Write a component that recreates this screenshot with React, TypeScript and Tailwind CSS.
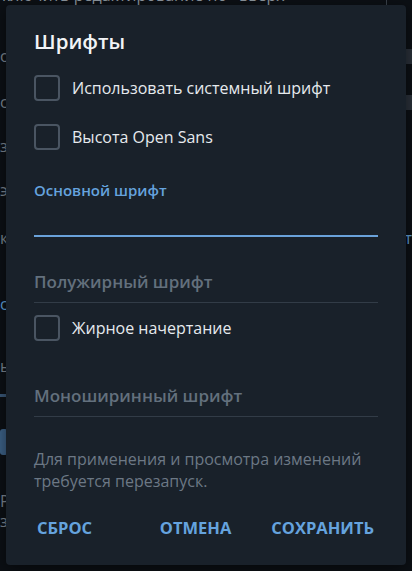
import { ReactNode } from 'react'

const font = { fontFamily: '"Open Sans", "Noto Sans", sans-serif' }

function Checkbox({ label }: { label: string }) {
  return (
    <div className="flex items-center gap-[12px] h-[26px]">
      <div className="w-[26px] h-[26px] rounded-[4px] border-2 border-[#4a5562] flex-shrink-0" />
      <span className="text-[16px] leading-[26px] text-[#e6eaee]">{label}</span>
    </div>
  )
}

function FieldTitle({ children, className }: { children: ReactNode; className: string }) {
  return (
    <div className={`border-b border-[#323c47] pb-[8px] ${className}`}>
      <p className="text-[17px] leading-[24px] font-semibold text-[#63707d]">{children}</p>
    </div>
  )
}

export default function App() {
  return (
    <div className="relative w-[412px] h-[571px] overflow-hidden bg-[#0c1015]" style={font}>
      {/* page behind the overlay */}
      <div className="flex flex-col text-[#7c8690] text-[16px]">
        <div className="flex items-end h-[6px] overflow-hidden">
          <p className="leading-[22px] whitespace-nowrap pl-[2px] mt-[-14px] text-[#8d969f]">
            ключить редактирование по «вверх»
          </p>
          <div className="ml-auto mr-[14px] w-[12px] h-[6px] border-l border-[#3a424b]" />
        </div>
        <div className="flex justify-between items-center h-[44px] mt-[28px]">
          <span className="leading-none">о</span>
          <div className="w-[8px] h-[15px] bg-[#2a313a]" />
        </div>
        <div className="flex justify-between items-center h-[44px] mt-[2px]">
          <span className="leading-none">с</span>
          <div className="w-[8px] h-[15px] bg-[#2a313a]" />
        </div>
        <div className="flex items-center h-[44px]">
          <span className="leading-none">з</span>
        </div>
        <div className="flex items-center h-[44px]">
          <span className="leading-none">э</span>
        </div>
        <div className="flex justify-between items-center h-[52px]">
          <span className="leading-none">к</span>
          <span className="leading-none text-[#5f9fd8]">т</span>
        </div>
        <div className="flex items-center h-[80px]">
          <span className="leading-none text-[#5f9fd8]">с</span>
        </div>
        <div className="flex items-center h-[44px]">
          <span className="leading-none">ь</span>
        </div>
        <div className="h-[3px] w-[8px] bg-[#3a5878] mt-[6px]" />
        <div className="mt-[32px] w-[8px] h-[26px] rounded-[3px] bg-[#3d6288]" />
        <div className="flex flex-col mt-[36px] leading-[20px]">
          <span>Р</span>
          <span>з</span>
        </div>
      </div>

      {/* dialog */}
      <div className="absolute left-[6px] top-[5px] w-[400px] h-[560px] rounded-[4px] bg-[#19212a] px-[28px] flex flex-col shadow-[0_4px_16px_rgba(0,0,0,0.5)]">
        <h1 className="mt-[22px] text-[20.5px] leading-[28px] font-semibold text-[#f2f4f6]">Шрифты</h1>

        <div className="mt-[20px]">
          <Checkbox label="Использовать системный шрифт" />
        </div>
        <div className="mt-[23px]">
          <Checkbox label="Высота Open Sans" />
        </div>

        {/* main font field, focused */}
        <p className="mt-[30px] text-[15px] leading-[20px] font-semibold text-[#65a3de]">Основной шрифт</p>
        <div className="h-[35px]" />
        <div className="h-[2px] bg-[#6aa2da]" />

        <FieldTitle className="mt-[33px]">Полужирный шрифт</FieldTitle>
        <div className="mt-[12px]">
          <Checkbox label="Жирное начертание" />
        </div>

        <FieldTitle className="mt-[43px]">Моноширинный шрифт</FieldTitle>

        <p className="mt-[31px] text-[16px] leading-[22px] text-[#6c7885]">
          Для применения и просмотра изменений
          <br />
          требуется перезапуск.
        </p>

        {/* actions */}
        <div className="flex items-center mt-[26px] text-[16.5px] leading-[20px] font-bold text-[#65a3de]">
          <button className="ml-[3px]">СБРОС</button>
          <div className="ml-auto mr-[4px] flex gap-[40px]">
            <button>ОТМЕНА</button>
            <button>СОХРАНИТЬ</button>
          </div>
        </div>
      </div>
    </div>
  )
}
